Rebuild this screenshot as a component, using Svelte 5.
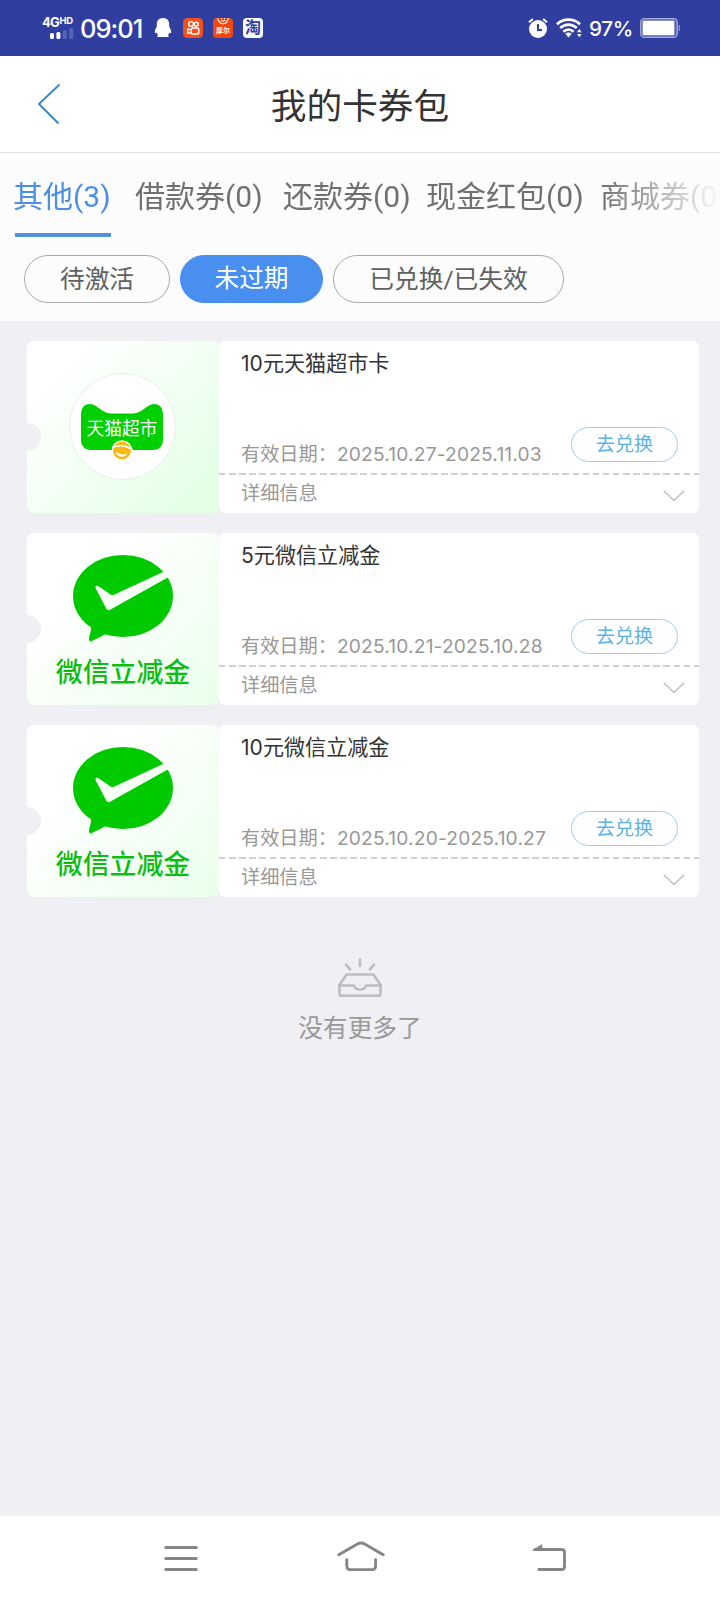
<script>
  const tabs = ['其他(3)', '借款券(0)', '还款券(0)', '现金红包(0)', '商城券(0)'];
  const filters = ['待激活', '未过期', '已兑换/已失效'];
  const coupons = [
    { kind: 'tmall', amount: '10', name: '元天猫超市卡', date: '2025.10.27-2025.11.03' },
    { kind: 'wechat', amount: '5', name: '元微信立减金', date: '2025.10.21-2025.10.28' },
    { kind: 'wechat', amount: '10', name: '元微信立减金', date: '2025.10.20-2025.10.27' }
  ];
</script>

<div class="screen">
  <div class="status">
    <div class="net">
      <span class="gen">4G<small>HD</small></span>
      <svg width="24" height="12" viewBox="0 0 24 12">
        <g fill="#fff"><rect x="0" y="5" width="4" height="6" rx="1.5" /><rect x="6.4" y="4" width="4" height="7" rx="1.5" /></g>
        <g fill="#5763b4"><rect x="12.8" y="2" width="4" height="9" rx="1.5" /><rect x="19.2" y="0" width="4" height="11" rx="1.5" /></g>
      </svg>
    </div>
    <span class="time">09:01</span>
    <svg class="qq" width="18" height="22" viewBox="0 0 18 22">
      <path fill="#fff" d="M9 1c4.200 0 6.200 2.800 6.200 6.200v2.500c1.500 2.200 2.300 4.300 1.900 6-.3.900-1 .4-1.700-.3-.3 1.200-.8 2-1.500 2.800 1.300.7 1.200 1.900-.5 1.900H4.600c-1.700 0-1.800-1.200-.5-1.900-.7-.8-1.200-1.600-1.500-2.800-.7.7-1.400 1.200-1.700.3-.4-1.700.4-3.800 1.900-6V7.200C2.800 3.800 4.800 1 9 1z" />
    </svg>
    <svg class="app" width="20" height="20" viewBox="0 0 20 20">
      <rect width="20" height="20" rx="4" fill="#f4501e" />
      <g fill="none" stroke="#fff" stroke-width="1.400">
        <circle cx="8" cy="6" r="2.400" /><circle cx="13.300" cy="6.200" r="2" />
        <rect x="8.200" y="10" width="7.600" height="6" rx="1.800" /><path d="M8 11.800 4.800 11v4.400L8 14.500" />
      </g>
    </svg>
    <div class="app tiny">
      <svg width="20" height="8" viewBox="0 0 20 8"><g fill="none" stroke="#fff" stroke-width="1.100"><path d="M4.500 0c1 3.500 2.800 5.800 5.500 5.800S14.500 3.500 15.500 0" /><path d="M8 2c.8 1.500 3.200 1.500 4 0M8.500 0v1M11.500 0v1" /></g></svg>
      <b>厚尔</b>
    </div>
    <div class="app tao">淘</div>
    <div class="right">
      <svg width="20" height="21" viewBox="0 0 20 21">
        <circle cx="10" cy="11" r="9" fill="#fff" />
        <path d="M1 4.200 4.800 1M19 4.200 15.200 1" stroke="#fff" stroke-width="2" />
        <path d="M10 6v6h4" fill="none" stroke="#303e9f" stroke-width="2" />
      </svg>
      <svg class="wifi" width="26" height="20" viewBox="0 0 26 20">
        <g fill="none" stroke="#fff" stroke-width="2.800">
          <path d="M1 6.200C7.600.1 17.400.1 24 6.200" /><path d="M4.200 10c5-4.600 11.600-4.600 16.600 0" /><path d="M7.400 13.700c3.100-2.900 7.100-2.900 10.200 0" />
        </g>
        <path d="M9.300 15.800c2-1.700 4.400-1.700 6.400 0L12.500 19.500z" fill="#fff" />
        <path d="M21 14.300 23.300 11l2.300 3.300zM21 16l2.300 3.300 2.300-3.300z" fill="#fff" />
      </svg>
      <span class="pct">97%</span>
      <svg width="40" height="20" viewBox="0 0 40 20">
        <rect x=".7" y=".7" width="36.600" height="18.600" rx="3.500" fill="#5965b4" stroke="#a3abd8" stroke-width="1.300" />
        <rect x="2.700" y="2.700" width="31.600" height="14.600" rx="1" fill="#fff" /><path d="M39.200 7v6" stroke="#8e97cd" stroke-width="1.300" />
      </svg>
    </div>
  </div>

  <header>
    <svg width="24" height="42" viewBox="0 0 24 42"><path d="M22.500 1.500 2 21 21.500 40.500" fill="none" stroke="#3f88ba" stroke-width="2" /></svg>
    <h1>我的卡券包</h1>
  </header>

  <section class="selectors">
    <nav class="tabs">
      {#each tabs as tab, i}
        <div class="tab" class:active={i === 0}><span>{tab}</span></div>
      {/each}
    </nav>
    <div class="filters">
      {#each filters as f, i}
        <div class="pill" class:on={i === 1}>{f}</div>
      {/each}
    </div>
  </section>

  <main>
    {#each coupons as c}
      <article>
        <div class="brand {c.kind}">
          {#if c.kind === 'tmall'}
            <div class="disc">
              <svg width="84" height="58" viewBox="0 0 84 58">
                <path fill="#00d000" d="M1 11C1 3 5 0 10 0c7 0 12 9.500 21 9.500h22C62 9.500 67 0 74 0c5 0 9 3 9 11v25c0 6-4 10-10 10H11C5 46 1 42 1 36z" />
                <circle cx="42" cy="46.500" r="10.300" fill="#fff" /><circle cx="42" cy="46.500" r="9" fill="#fbb914" />
                <path d="M32 43.500c5-2 13-2.500 20.500 2" fill="none" stroke="#fff" stroke-width="1.500" />
                <path d="M36 48c1 4.500 7 6 10.500 2.500-4 1-7.500.3-10.500-2.500z" fill="#fff" stroke="#fff" stroke-width=".8" />
                <text x="6.500" y="31" textLength="71" fill="#fff">天猫超市</text>
              </svg>
            </div>
          {:else}
            <svg width="102" height="88" viewBox="0 0 102 88">
              <ellipse cx="51" cy="42" rx="50" ry="41" fill="#00c900" />
              <path fill="#00c900" d="M19 72c1 3-2 10-2 13 0 2 1 3 3 2l14-7z" />
              <path fill="#f7fff7" d="M23.500 34c-.5-2.300 1.300-3 3-1.700l12.500 8.400c1 .5 2 .3 3 0L91 18l11-4v6L38.500 55.500c-2 1.200-3.300.9-4.300-1z" />
            </svg>
            <strong>微信立减金</strong>
          {/if}
          <i></i>
        </div>
        <div class="info">
          <div class="top">
            <h2><span>{c.amount}</span>{c.name}</h2>
            <div class="row">
              <p>有效日期：<span>{c.date}</span></p>
              <button>去兑换</button>
            </div>
          </div>
          <div class="dash"></div>
          <div class="detail">
            <span>详细信息</span>
            <svg width="22" height="12" viewBox="0 0 22 12"><path d="M.7.7 11 10.500 21.300.7" fill="none" stroke="#bdbdbd" stroke-width="1.500" /></svg>
          </div>
        </div>
      </article>
    {/each}

    <div class="empty">
      <svg width="46" height="40" viewBox="0 0 46 40">
        <g fill="none" stroke="#bdbdc1" stroke-width="2.600" stroke-linejoin="round" stroke-linecap="round">
          <path d="M23 1.500v6.500M9 6.500l4 5M37 6.500l-4 5" />
          <path d="M2.500 27 9.500 16.500h27L43.500 27v9c0 1-.8 1.800-1.800 1.800H4.300c-1 0-1.800-.8-1.800-1.800z" />
          <path d="M2.500 27.500H17c.5 2.500 2.500 4 6 4s5.500-1.500 6-4h14.500" />
        </g>
      </svg>
      <p>没有更多了</p>
    </div>
  </main>

  <footer>
    <svg width="34" height="26" viewBox="0 0 34 26"><path d="M1.700 2.500h30.600M1.700 13.500h30.600M1.700 24.500h30.600" stroke="#868686" stroke-width="3" stroke-linecap="round" /></svg>
    <svg width="48" height="30" viewBox="0 0 48 30"><path d="M1.800 13.800 20 3.200c3-1.700 5-1.700 8 0l18.200 10.600M9.800 18.700v6c0 2.500 1.500 4 4 4h20.800c2.500 0 4-1.500 4-4v-6" fill="none" stroke="#868686" stroke-width="2.900" stroke-linecap="round" /></svg>
    <svg width="36" height="28" viewBox="0 0 36 28"><path d="M0 6.400 10.200 0v6.800H.5z" fill="#868686" /><path d="M3 5.500h26.500c2 0 3 1 3 3V22.500c0 2-1 3-3 3H6.800" fill="none" stroke="#868686" stroke-width="2.900" stroke-linecap="round" /></svg>
  </footer>
</div>

<style>
  :global(body) { margin: 0; background: #efeff4; }
  h1, h2, p { margin: 0; font-weight: 400; }
  svg { display: block; flex: none; }
  .screen {
    width: 720px; height: 1600px; display: flex; flex-direction: column; overflow: hidden;
    background: #efeff4; font-family: Roboto, "Noto Sans CJK SC", sans-serif; white-space: nowrap;
  }

  .status { height: 56px; flex: none; background: #303e9f; color: #fff; display: flex; align-items: center; box-sizing: border-box; padding: 0 40px 0 42px; font-family: Inter, "Noto Sans CJK SC", sans-serif; }
  .net { width: 38px; display: flex; flex-direction: column; }
  .net svg { margin: 0 0 0 8px; }
  .gen { font-size: 13px; font-weight: 700; line-height: 11px; height: 11px; display: flex; align-items: flex-start; letter-spacing: -.8px; }
  .gen small { font-size: 9.500px; line-height: 8px; letter-spacing: -.3px; margin-left: .5px; }
  .time { width: 74px; font-size: 25.500px; font-weight: 500; letter-spacing: -1px; }
  .qq { margin-right: 11px; }
  .app { width: 20px; height: 20px; margin-right: 10px; border-radius: 4px; overflow: hidden; flex: none; }
  .tiny { background: #f4460f; }
  .tiny b { display: block; font-size: 7px; line-height: 9px; text-align: center; }
  .tao { background: #fff; color: #303e9f; font-size: 16px; line-height: 19px; font-weight: 700; text-align: center; }
  .right { margin-left: auto; display: flex; align-items: center; }
  .right > svg:first-child { margin-right: 8px; }
  .wifi { margin-right: 7px; }
  .pct { width: 51px; font-size: 20.700px; font-weight: 500; letter-spacing: -.4px; }

  header { height: 97px; flex: none; box-sizing: border-box; border-bottom: 1px solid #e2e2e2; background: #fff; display: grid; grid-template-columns: 60px 1fr 60px; align-items: center; }
  header svg { margin: 0 0 0 37px; }
  h1 { font-size: 35.700px; line-height: 48px; padding-top: 5px; color: #333; text-align: center; }

  .selectors { height: 168px; flex: none; background: #fcfcfc; overflow: hidden; }
  .tabs { height: 84px; display: grid; grid-template-columns: 122px 148px 143px 174px 160px; padding-left: 13px; font-size: 30px; color: #707070; line-height: 87px; mask-image: linear-gradient(90deg, #000 600px, transparent 722px); }
  .tab.active { color: #4a8fe4; display: flex; flex-direction: column; }
  .tab.active::after { content: ""; width: 96px; height: 4px; margin: -4px 0 0 2px; background: #5490d6; flex: none; }
  .tab.active span { height: 84px; }
  .filters { display: grid; grid-template-columns: 146px 143px 231px; gap: 10px; padding: 18px 0 0 24px; }
  .pill { height: 48px; box-sizing: border-box; border: 1px solid #aaa; border-radius: 24px; font-size: 24.700px; line-height: 48px; text-align: center; color: #606060; }
  .pill.on { background: #488ff0; border-color: #488ff0; color: #fff; line-height: 45px; }

  main { flex: 1; padding: 20px 21px 0 27px; }
  article { display: flex; height: 172px; margin-bottom: 20px; }
  .brand { position: relative; width: 192px; border-radius: 7px; overflow: hidden; background: linear-gradient(135deg, #fff 15%, #e4ffe6 90%); display: flex; flex-direction: column; align-items: center; flex: none; }
  .brand i { position: absolute; left: -14px; top: 82px; width: 28px; height: 28px; border-radius: 50%; background: #efeff4; }
  .wechat { background: linear-gradient(135deg, #fff 30%, #eaffeb); }
  .wechat svg { margin-top: 21px; }
  .wechat strong { font-size: 26.900px; font-weight: 500; line-height: 38px; margin-top: 12px; color: #0dbd12; }
  .disc { width: 105px; height: 105px; margin: 32px 2px 0 0; border-radius: 50%; border: 1px solid #e6eee8; background: #fff; }
  .disc svg { margin: 30px 0 0 10px; }
  .disc text { font: 400 17.700px "Noto Sans CJK SC", sans-serif; }
  .info { flex: 1; background: #fff; border-radius: 6px; display: flex; flex-direction: column; }
  .top { height: 132px; padding: 0 21px 0 22px; }
  h2 { font-size: 21.100px; line-height: 45px; height: 86px; box-sizing: border-box; color: #333; }
  h2 span { font-family: Inter, sans-serif; }
  .row { display: flex; justify-content: space-between; }
  .row p { font-size: 19.200px; line-height: 54px; height: 46px; color: #989898; }
  .row span { font-family: Inter, sans-serif; letter-spacing: .17px; }
  button { width: 107px; height: 35px; box-sizing: border-box; padding: 0 0 2px; border: 1px solid #9ecdea; border-radius: 18px; background: #fff; color: #5eb0e6; font: 19.200px/31px "Noto Sans CJK SC", sans-serif; }
  .dash { height: 2px; background: repeating-linear-gradient(90deg, #d0d0d0 0 6.500px, transparent 6.500px 10.100px); }
  .detail { height: 38px; padding: 0 14px 0 22px; display: flex; align-items: center; justify-content: space-between; font-size: 19.200px; line-height: 40px; color: #989898; }
  .detail svg { margin-top: 3px; }

  .empty { display: flex; flex-direction: column; align-items: center; padding-top: 41px; margin-left: -6px; }
  .empty p { font-size: 24.700px; line-height: 36px; margin-top: 13px; color: #999; }

  footer { height: 84px; flex: none; background: #fff; display: flex; align-items: flex-start; box-sizing: border-box; padding: 28px 152px 0 163px; justify-content: space-between; }
  footer svg:first-child { margin: 1px 0 0 1px; }
  footer svg:nth-child(2) { margin: -3px 9px 0 0; }
  footer svg:last-child { margin-top: 0; }
</style>
